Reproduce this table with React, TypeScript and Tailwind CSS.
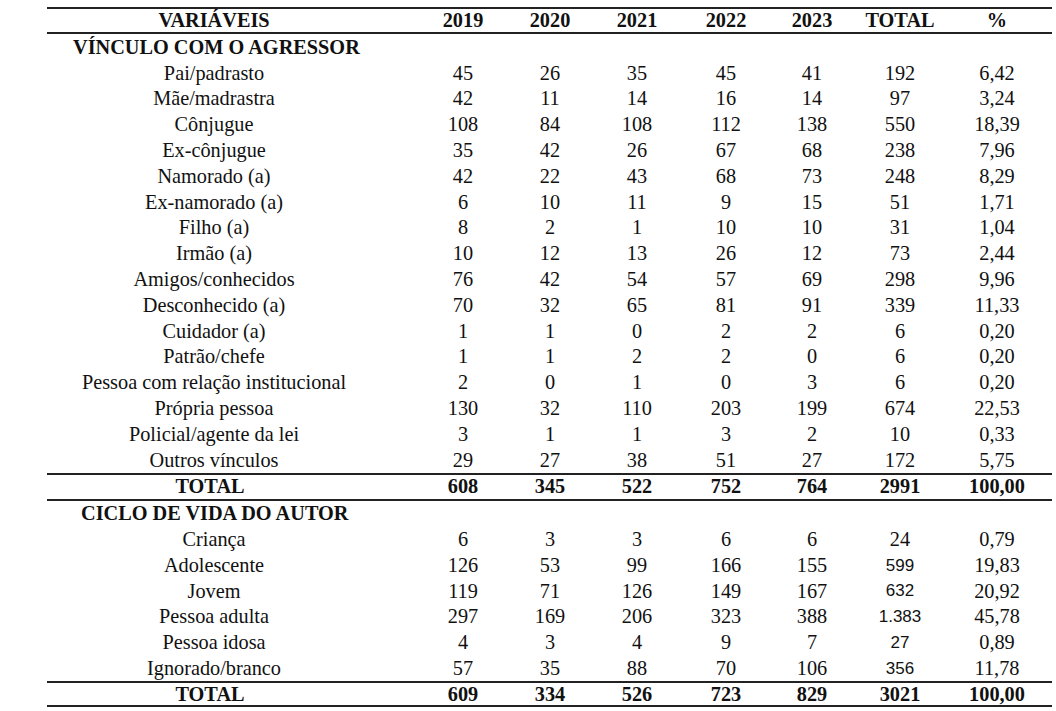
const years = ["2019", "2020", "2021", "2022", "2023"];

type Row = { label: string; values: string[]; sansTotal?: boolean };

const vinculo: Row[] = [
  { label: "Pai/padrasto", values: ["45", "26", "35", "45", "41", "192", "6,42"] },
  { label: "Mãe/madrastra", values: ["42", "11", "14", "16", "14", "97", "3,24"] },
  { label: "Cônjugue", values: ["108", "84", "108", "112", "138", "550", "18,39"] },
  { label: "Ex-cônjugue", values: ["35", "42", "26", "67", "68", "238", "7,96"] },
  { label: "Namorado (a)", values: ["42", "22", "43", "68", "73", "248", "8,29"] },
  { label: "Ex-namorado (a)", values: ["6", "10", "11", "9", "15", "51", "1,71"] },
  { label: "Filho (a)", values: ["8", "2", "1", "10", "10", "31", "1,04"] },
  { label: "Irmão (a)", values: ["10", "12", "13", "26", "12", "73", "2,44"] },
  { label: "Amigos/conhecidos", values: ["76", "42", "54", "57", "69", "298", "9,96"] },
  { label: "Desconhecido (a)", values: ["70", "32", "65", "81", "91", "339", "11,33"] },
  { label: "Cuidador (a)", values: ["1", "1", "0", "2", "2", "6", "0,20"] },
  { label: "Patrão/chefe", values: ["1", "1", "2", "2", "0", "6", "0,20"] },
  { label: "Pessoa com relação institucional", values: ["2", "0", "1", "0", "3", "6", "0,20"] },
  { label: "Própria pessoa", values: ["130", "32", "110", "203", "199", "674", "22,53"] },
  { label: "Policial/agente da lei", values: ["3", "1", "1", "3", "2", "10", "0,33"] },
  { label: "Outros vínculos", values: ["29", "27", "38", "51", "27", "172", "5,75"] },
];

const ciclo: Row[] = [
  { label: "Criança", values: ["6", "3", "3", "6", "6", "24", "0,79"] },
  { label: "Adolescente", values: ["126", "53", "99", "166", "155", "599", "19,83"], sansTotal: true },
  { label: "Jovem", values: ["119", "71", "126", "149", "167", "632", "20,92"], sansTotal: true },
  { label: "Pessoa adulta", values: ["297", "169", "206", "323", "388", "1.383", "45,78"], sansTotal: true },
  { label: "Pessoa idosa", values: ["4", "3", "4", "9", "7", "27", "0,89"], sansTotal: true },
  { label: "Ignorado/branco", values: ["57", "35", "88", "70", "106", "356", "11,78"], sansTotal: true },
];

const grid =
  "grid grid-cols-[372px_88px_86px_88px_90px_82px_94px_100px] items-center text-center";

function DataRow({ row }: { row: Row }) {
  return (
    <div className={`${grid} h-[25.8px]`}>
      <div className="pr-[38px]">{row.label}</div>
      {row.values.map((v, i) =>
        i === 5 && row.sansTotal ? (
          <div key={i} className="font-['Liberation_Sans',Arial,sans-serif] text-[17px]">
            {v}
          </div>
        ) : (
          <div key={i}>{v}</div>
        )
      )}
    </div>
  );
}

function TotalRow({ values, className }: { values: string[]; className: string }) {
  return (
    <div className={`${grid} font-bold border-[#222] ${className}`}>
      <div className="pr-[46px]">TOTAL</div>
      {values.map((v, i) => (
        <div key={i}>{v}</div>
      ))}
    </div>
  );
}

export default function App() {
  return (
    <div className="min-h-screen bg-white text-[#111] font-['Liberation_Serif','Times_New_Roman',serif] text-[20.3px] leading-none">
      <div className="ml-[47px] w-[1005px] pt-[7px]">
        <div className={`${grid} h-[27px] border-t-2 border-b-2 border-[#222] font-bold`}>
          <div className="pr-[38px]">VARIÁVEIS</div>
          {years.map((y) => (
            <div key={y}>{y}</div>
          ))}
          <div>TOTAL</div>
          <div>%</div>
        </div>

        <div className="h-[25.8px] flex items-center pl-[26px] font-bold">VÍNCULO COM O AGRESSOR</div>
        {vinculo.map((r) => (
          <DataRow key={r.label} row={r} />
        ))}
        <TotalRow
          values={["608", "345", "522", "752", "764", "2991", "100,00"]}
          className="h-[28px] border-t-2 border-b-2"
        />

        <div className="h-[25.8px] flex items-center pl-[34px] font-bold">CICLO DE VIDA DO AUTOR</div>
        {ciclo.map((r) => (
          <DataRow key={r.label} row={r} />
        ))}
        <TotalRow
          values={["609", "334", "526", "723", "829", "3021", "100,00"]}
          className="h-[26px] border-t-2 border-b-2"
        />
      </div>
    </div>
  );
}
